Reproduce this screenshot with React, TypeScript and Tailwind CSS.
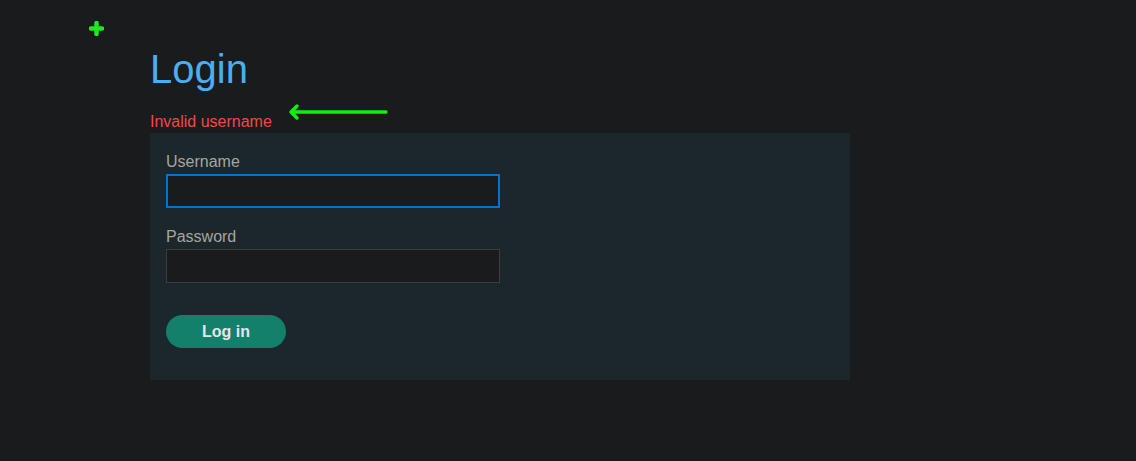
import React from 'react';

const App = () => {
  return (
    <div className="relative min-h-[461px] w-full bg-[#1a1b1d] font-['Liberation_Sans',Arial,sans-serif]">
      {/* annotation marks */}
      <svg className="absolute left-[89px] top-[21px]" width="15" height="15" viewBox="0 0 15 15">
        <path d="M7.5 2v11M2 7.5h11" stroke="#1ee81e" strokeWidth="4.5" strokeLinecap="round" />
      </svg>
      <svg className="absolute left-[286px] top-[102px]" width="104" height="20" viewBox="0 0 104 20">
        <path d="M5 10h95M11 4l-6 6 6 6" stroke="#11ee11" strokeWidth="3.4" fill="none" strokeLinecap="round" strokeLinejoin="round" />
      </svg>

      <div className="pl-[150px] pt-[45px]">
        <h1 className="text-[40px] leading-[48px] text-[#4aaef0]">Login</h1>
        <p className="mt-[18px] text-base leading-[22px] text-[#f04848]">Invalid username</p>

        <form className="flex w-[700px] flex-col bg-[#1c272c] px-4 pt-[17px] pb-8">
          <label className="text-base leading-6 text-[#a6a69e]">Username</label>
          <input
            type="text"
            className="h-[34px] w-[334px] border-2 border-[#0a72c8] bg-[#1a1b1d] outline-none"
          />

          <label className="mt-[17px] text-base leading-6 text-[#a6a69e]">Password</label>
          <input
            type="password"
            className="h-[34px] w-[334px] border border-[#3c3d3e] bg-[#1a1b1d] outline-none"
          />

          <button
            type="button"
            className="mt-8 h-[33px] w-[120px] rounded-full bg-[#12806a] text-base font-bold text-[#e4e6e4]"
          >
            Log in
          </button>
        </form>
      </div>
    </div>
  );
};

export default App;
